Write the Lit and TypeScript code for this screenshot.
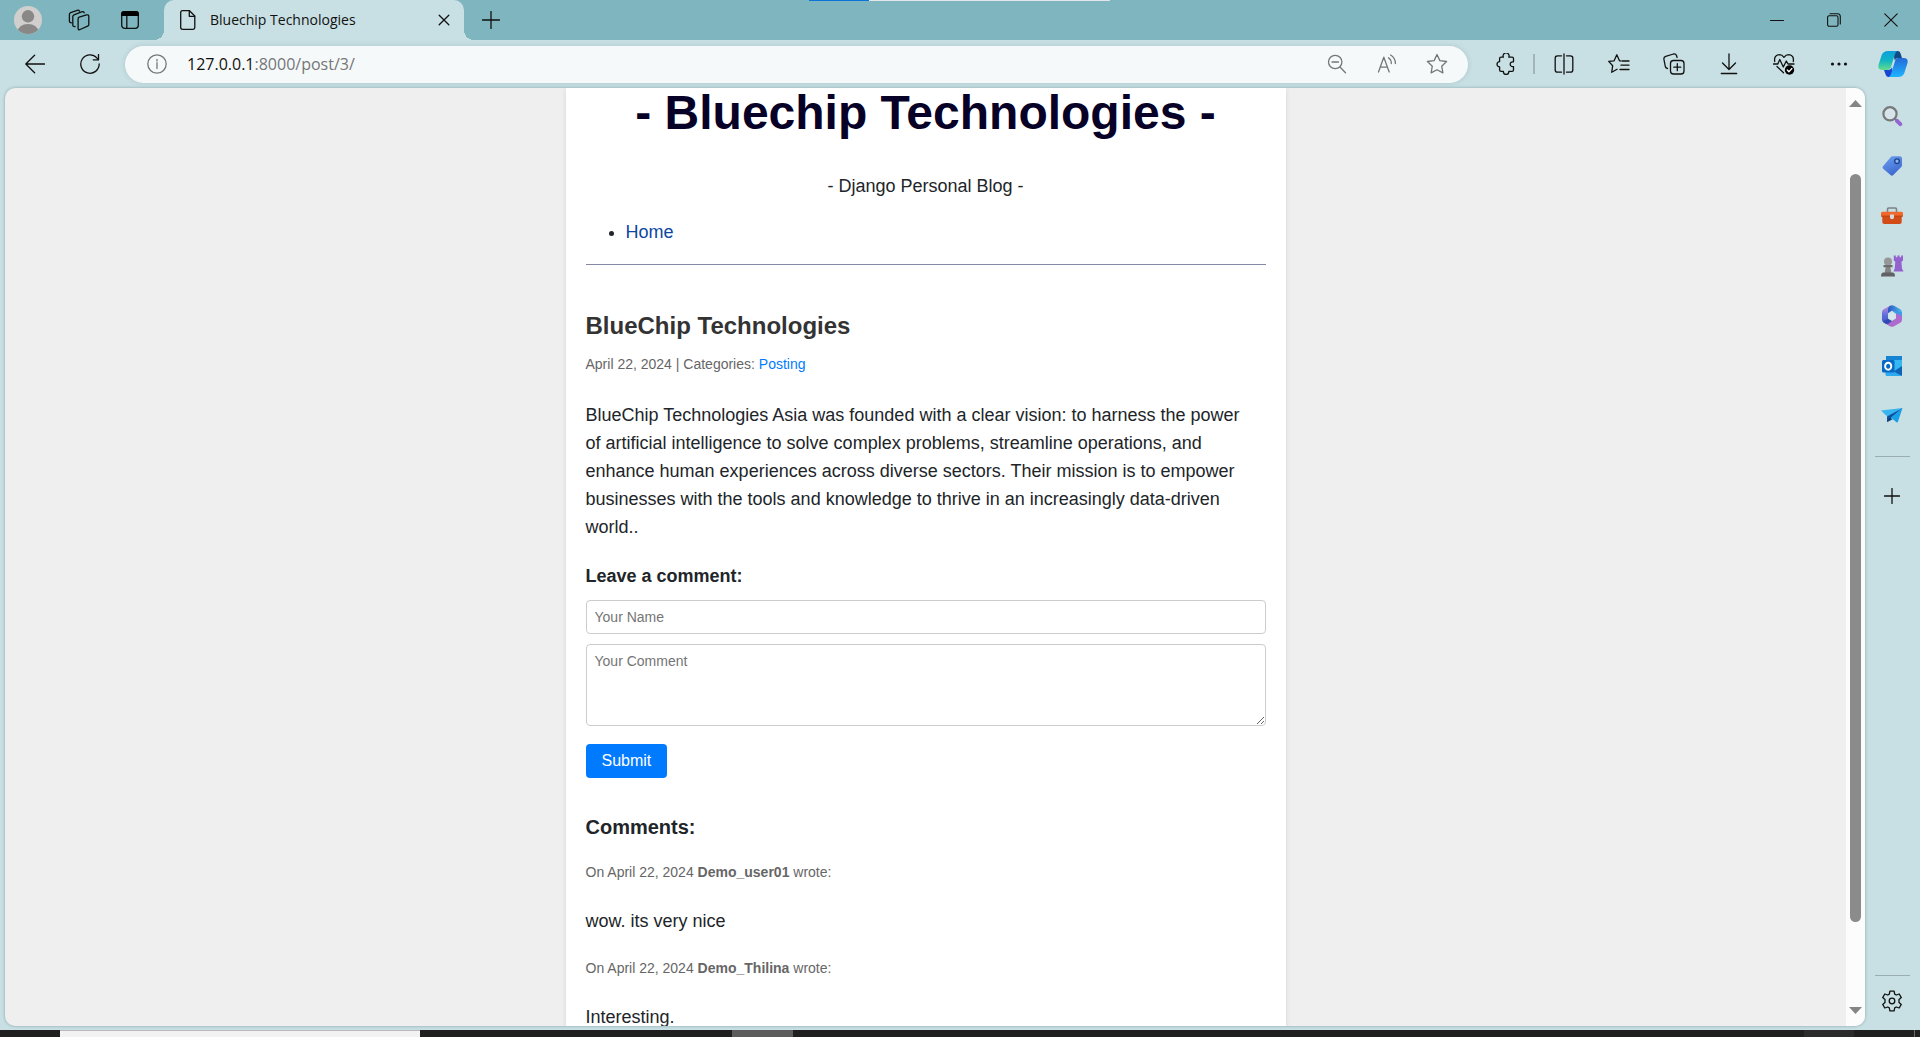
import { LitElement, html, css, svg } from "lit";
import { customElement } from "lit/decorators.js";

type Tool = { label: string; icon: unknown };

const icon = (size: number, body: unknown, cls = "line") =>
  html`<svg class=${cls} width=${size} height=${size} viewBox="0 0 ${size} ${size}" aria-hidden="true">${body}</svg>`;

const avatar = icon(28, svg`
  <clipPath id="face"><circle cx="14" cy="14" r="14"/></clipPath>
  <g clip-path="url(#face)"><rect width="28" height="28" fill="#d1cfcd"/>
  <circle cx="14" cy="10.300" r="6.200" fill="#8a8886"/><ellipse cx="14" cy="26" rx="10.500" ry="8" fill="#8a8886"/></g>`, "art");

const workspaces = icon(22, svg`
  <path d="M11.200 8.200 18.600 5.900q2.200-.4 2.200 1.500v8q0 1.200-1.200 1.700l-7.500 3.400q-2 .8-2-1.200V9.900q0-1.300 1.100-1.700Z"/>
  <path d="M7 17.500q-2.200.3-2.200-1.800V7.500q0-1.200 1.200-1.700l7.500-3q2-.5 2.800 1"/>
  <path d="M3.400 13.800q-2 0-2-1.800V5.400q0-1.200 1.200-1.700l6.600-2.400q1.600-.5 2.300.8"/>`);

const verticalTabs = icon(20, svg`
  <rect x="1.700" y="1.700" width="16.600" height="16.600" rx="3"/><path d="M6.800 6v12"/>
  <path d="M1 6V4q0-3 3-3h12q3 0 3 3v2Z" fill="#000" stroke="none"/>`);

const fileIcon = icon(20, svg`
  <path d="M4.500.7h7l5.300 5.300v11.500q0 1.800-1.800 1.800H4.500q-1.800 0-1.800-1.800v-15Q2.700.7 4.500.7Z"/><path d="M11.300 1v5.300h5.300"/>`);

const closeSmall = icon(12, svg`<path d="M1.200 1.200l9.600 9.600M10.800 1.200l-9.600 9.600"/>`);
const plus = icon(18, svg`<path d="M9 .5v17M.5 9h17"/>`);
const back = icon(20, svg`<path d="M19.500 10H1M9.600 1.200.8 10l8.800 8.800"/>`);
const refresh = icon(20, svg`<path d="M19.200 10A9.200 9.200 0 1 1 16.800 3.900L18.300 5.500"/><path d="M18.500.5v5.300h-5.300"/>`);
const info = icon(20, svg`<circle cx="10" cy="10" r="9.200"/><path d="M10 8.600v6M10 5.400v1.500"/>`);
const zoomOut = icon(20, svg`<circle cx="8.200" cy="8" r="6.700"/><path d="M13 13l5.500 5.700M5 8h6.500"/>`);
const readAloud = icon(20, svg`<path d="M1.500 18 6.800 3.200 12.200 18M3.200 13.200h7.200M11.500 3.800q3 2.200 2.800 5.700M13.600 1q5 3.200 4.800 8.500"/>`);
const star = icon(22, svg`<path d="M11 1.500l2.900 6.100 6.700.9-4.900 4.700 1.200 6.700L11 16.700l-5.900 3.200 1.200-6.700L1.400 8.500l6.700-.9Z"/>`);
const puzzle = icon(22, svg`<path d="M6 4.200h2.400a3 3 0 1 1 5.400 0h3.300q1.400 0 1.400 1.400v3.200h-.9a2.400 2.400 0 1 0 0 4.800h.9V17q0 1.400-1.400 1.400h-3.300v.3a2.700 2.700 0 1 1-5.400 0v-.3H6q-1.400 0-1.400-1.400v-3.200a2.600 2.600 0 1 1 0-5.200V5.600q0-1.400 1.400-1.400Z"/>`);
const split = icon(22, svg`<path d="M8.500 2.800H4.700Q2.200 2.800 2.200 5v12q0 2.200 2.500 2.200h3.800M13.500 2.800h3.800q2.500 0 2.500 2.200v12q0 2.200-2.500 2.200h-3.800M11 1v20"/>`);
const favorites = icon(22, svg`<path d="M12.800 7.800h-1.300L8.800 1.800 6.100 7.800l-5.400.6 4 4.300-1 6.600 5.400-3"/><path d="M14 8h7M13 12.200h8M12 16.500h9"/>`);
const collections = icon(22, svg`<rect x="7.500" y="7.500" width="13.500" height="13.500" rx="3"/><path d="M14.300 10.700v7M10.800 14.200h7M4.500 15.500q-1.600-.2-2.200-2L.9 6.200Q.6 4 2.700 3.300L10.500 1q2.200-.5 3 1.500l.6 2"/>`);
const download = icon(22, svg`<path d="M11 .8v15.500M4.500 10l6.500 6.500 6.500-6.500M3.300 20.500h15.400"/>`);
const health = icon(22, svg`
  <path d="M1.700 8.500Q.8 2 6.200 1.600q3 0 4.800 2.700 1.800-2.700 4.800-2.700Q21.200 2 20.300 8.500M4 13.500l6.500 6.300"/>
  <path d="M.5 11h4.300l2-4.500 3.500 7.500 3-6 1.700 3h6"/>
  <circle cx="16.500" cy="17" r="4.700" fill="#000" stroke="none"/><path d="m14.300 17 1.600 1.700 3-3.200" stroke="#fff"/>`);
const dots = icon(18, svg`<g fill="#111" stroke="none"><circle cx="2.500" cy="9" r="1.600"/><circle cx="9" cy="9" r="1.600"/><circle cx="15.500" cy="9" r="1.600"/></g>`);
const minimize = icon(14, svg`<path d="M.5 7.500h13" stroke-width="1"/>`);
const restore = icon(14, svg`<rect x=".6" y="2.800" width="10.400" height="10.400" rx="1.500" stroke-width="1.100"/><path d="M3 .7h7.500q2.800 0 2.800 2.800V11" stroke-width="1.100"/>`);
const closeWindow = icon(14, svg`<path d="m.8.800 12.400 12.400M13.200.800.8 13.200" stroke-width="1.100"/>`);

const copilot = icon(30, svg`
  <linearGradient id="ca" x1="0" y1="0" x2="0" y2="1"><stop offset="0" stop-color="#0d9fdc"/><stop offset=".5" stop-color="#12b5c4"/><stop offset="1" stop-color="#63dd8c"/></linearGradient>
  <linearGradient id="cb" x1="0" y1="0" x2="0" y2="1"><stop offset="0" stop-color="#2469d8"/><stop offset="1" stop-color="#1cb4ff"/></linearGradient>
  <path d="M15 2h4.500q2.300 0 3 2.300L24 9h-4q-2.500 0-3.300 2.500Z" fill="#124a86"/>
  <path d="M15 28h-4.500q-2 0-2.800-2.200L6 21h4.700q2.500 0 3.300-2.700Z" fill="#1745d2"/>
  <path d="M10 2h9.500q-1.800.7-2.500 3L13 18q-.9 3-3.700 3H4.500Q-.6 21 .5 16L3.500 6.500Q5 2 10 2Z" fill="url(#ca)"/>
  <path d="M20 28h-9.500q1.800-.7 2.500-3L17 12q.9-3 3.700-3h4.800q5.100 0 4 5l-3 9.500Q25 28 20 28Z" fill="url(#cb)"/>`, "art");

const sideSearch = icon(24, svg`<circle cx="10" cy="9.800" r="6.600" fill="#d7e5ea" stroke="#77787a" stroke-width="2.200"/>
  <path d="m14.700 14.500 2 1.900" stroke="#77787a" stroke-width="2"/><path d="m17 16.800 3.300 3.300" stroke="#9465cf" stroke-width="4" stroke-linecap="round"/>`, "art");
const sideTag = icon(24, svg`<linearGradient id="tg" x1="0" y1="0" x2=".5" y2="1"><stop stop-color="#6ea3f2"/><stop offset="1" stop-color="#3d68cf"/></linearGradient>
  <path d="M12.500 2.300h7q2.500 0 2.500 2.500v6.400q0 1-.8 1.800l-7.900 8q-1.400 1.400-2.800 0l-7.300-6.200q-1.500-1.400 0-2.800l7.600-8.900q.7-.8 1.700-.8Z" fill="url(#tg)"/><circle cx="17" cy="7.200" r="2.300" fill="#8fb5ee" stroke="#20428f" stroke-width="1.400"/>`, "art");
const sideTools = icon(24, svg`<path d="M7.500 8V5.200q0-1.200 1.200-1.200h6.600q1.200 0 1.200 1.200V8" fill="none" stroke="#7b8286" stroke-width="1.600"/>
  <path d="M2.300 12h19.400v6q0 2-2 2H4.300q-2 0-2-2Z" fill="#d14c17"/><rect x="1" y="7.800" width="22" height="5" rx="1.500" fill="#f0682b"/><path d="M1.300 12.200h21.400" stroke="#b33a0c"/><path d="M10 10.500h4v2.800q0 2-2 2t-2-2Z" fill="#d6d9db"/>`, "art");
const sideGames = icon(24, svg`<path d="M13.800 1.500h2v1.800h1.600V1.500h2.200v1.800h1.600V1.500h1.800v5l-1.600 1.300.6 6.700 1.500 3H13.500l1.200-3 .6-6.700-1.500-1.300Z" fill="#9462ce"/>
  <circle cx="8" cy="7.500" r="4" fill="#979797"/><path d="M6 11h4l1.400 8H4.600Z" fill="#858585"/><rect x="3.300" y="11" width="9.400" height="2.300" rx="1" fill="#6e6e6e"/><path d="M3.500 18.500h9q2.500 0 2.500 4H1q0-4 2.500-4Z" fill="#626262"/>`, "art");
const side365 = icon(24, svg`<linearGradient id="ma" x1="0" x2="1"><stop stop-color="#2a55bf"/><stop offset="1" stop-color="#4fb7f2"/></linearGradient>
  <linearGradient id="mb" x1="0" x2="0" y1="0" y2="1"><stop stop-color="#c58be2"/><stop offset=".5" stop-color="#5f6fd8"/><stop offset="1" stop-color="#3f52c0"/></linearGradient>
  <path d="m10 1.800-6.300 3.500Q2 6.300 2 8.200v7.600q0 1.600 1.500 2.500l3 1.800 3.500-2.700-2-2.600V9.200l4-2.900Z" fill="url(#mb)"/>
  <path d="M10 1.800q2-1.200 4 0l6.300 3.500Q22 6.300 22 8.200v4.600l-5.700-1.600-.3-1.800-4-2.800L8 9.100V5.500q0-2.500 2-3.700Z" fill="url(#ma)"/>
  <path d="M22 10.200v5.600q0 1.900-1.700 2.900L14 22.300q-2 1.100-4 0l-5-2.900q3 .3 5-1.400l6-3.400V9.400q4.500.8 6 .8Z" fill="#ae6bcd"/>
  <path d="M22 8.200v4q-2-2.200-6-2.800L12 6.600Z" fill="#3f9be8"/><path d="m2.600 17.700 3.500 2.200q2 .3 3.900-1.500l2-1.400-4-2.300Z" fill="#2f49b5"/>
  <path d="m12 8.200 3.500 2v4l-3.500 2-3.500-2v-4Z" fill="#d5e6ec"/>`, "art");
const sideOutlook = icon(24, svg`<rect x="6" y="2" width="16" height="19" rx="1.500" fill="#35b8f1"/><path d="M6 2h16v4H6Z" fill="#1683d3"/><path d="M6 6h8v7H6Z" fill="#1a9ae6"/>
  <path d="m22 12-10 6.500L22 22Z" fill="#0f63b5"/><path d="M5.500 13 22 22H7q-1.500 0-1.500-1.500Z" fill="#2eaaf0"/><rect x="2" y="6" width="12.500" height="12.500" rx="1.500" fill="#0669c5"/><ellipse cx="8.200" cy="12.200" rx="3.100" ry="3.500" fill="none" stroke="#fff" stroke-width="1.900"/>`, "art");
const sideDrop = icon(24, svg`<path d="M1 6.500 22.500 4 7.500 12.700Z" fill="#36b5f0"/><path d="M22.500 4 7 12.500v5.800l4.500-4Z" fill="#0b4f9c"/><path d="M22.500 4 10.700 13.500l5.800 4.800q1 .6 1.500-.8Z" fill="#179fe8"/><path d="m7.300 18 2.300-4.300 3 1.500Z" fill="#0a3c74"/>`, "art");
const plusSide = icon(16, svg`<path d="M8 .5v15M.5 8h15"/>`);
const gear = icon(22, svg`<path d="M8.900 1.100h4.200l.6 3 1.600.9 2.900-1 2.100 3.600-2.300 2v2.800l2.300 2-2.100 3.600-2.900-1-1.600.9-.6 3H8.900l-.6-3-1.600-.9-2.900 1-2.100-3.600 2.300-2V9.600l-2.300-2L3.800 4l2.900 1 1.600-.9Z" stroke-linejoin="round"/><circle cx="11" cy="11" r="2.800"/>`);

const TOOLS: Tool[] = [
  { label: "Split screen", icon: split },
  { label: "Favorites", icon: favorites },
  { label: "Collections", icon: collections },
  { label: "Downloads", icon: download },
  { label: "Browser essentials", icon: health },
  { label: "Settings and more", icon: dots },
];

const APPS: Tool[] = [
  { label: "Search", icon: sideSearch },
  { label: "Shopping", icon: sideTag },
  { label: "Tools", icon: sideTools },
  { label: "Games", icon: sideGames },
  { label: "Microsoft 365", icon: side365 },
  { label: "Outlook", icon: sideOutlook },
  { label: "Drop", icon: sideDrop },
];

const COMMENTS = [
  { date: "April 22, 2024", author: "Demo_user01", text: "wow. its very nice" },
  { date: "April 22, 2024", author: "Demo_Thilina", text: "Interesting." },
];

@customElement("blog-post")
export class BlogPost extends LitElement {
  static styles = css`
    :host { display: block; font: 18px/28px "Liberation Sans", Arial, sans-serif; color: #212529; }
    .page { box-sizing: border-box; max-width: 720px; margin: 0 auto; padding: 0 20px 40px; background: #fff; box-shadow: 0 0 5px rgba(0, 0, 0, 0.1); }
    .title { margin: 0; font-size: 48px; line-height: 50px; text-align: center; color: #080127; }
    .tagline { margin: 34px 0 18px; text-align: center; }
    .menu { margin: 0; padding: 0 0 18px 40px; border-bottom: 1px solid #8488a4; }
    .home { color: #0d47a1; text-decoration: none; }
    .headline { margin: 47px 0 14px; font-size: 24px; line-height: 28px; color: #333; }
    .meta { margin: 0; font-size: 14px; line-height: 20px; color: #666; }
    .category { color: #007bff; text-decoration: none; }
    .body { margin: 27px 0 21px; padding-right: 12px; }
    .prompt { margin: 0 0 10px; font-size: 18px; line-height: 28px; }
    .form { display: flex; flex-direction: column; align-items: flex-start; gap: 10px; }
    .field { display: block; box-sizing: border-box; width: 100%; margin: 0; padding: 8px; border: 1px solid #ccc; border-radius: 4px; background: #fff; font: 14px/16px "Liberation Sans", Arial, sans-serif; color: #333; outline: none; }
    .field::placeholder { color: #757575; }
    .area { resize: vertical; }
    .submit { margin-top: 8px; padding: 8px 16px; border: 0; border-radius: 4px; background: #007bff; color: #fff; font: 16px/18px "Liberation Sans", Arial, sans-serif; cursor: pointer; }
    .comments { margin: 35px 0 21px; font-size: 20px; line-height: 28px; }
    .comment { margin: 25px 0 23px; }
  `;

  render() {
    return html`<main class="page">
      <h1 class="title">- Bluechip Technologies -</h1>
      <p class="tagline">- Django Personal Blog -</p>
      <ul class="menu"><li><a class="home" href="#home">Home</a></li></ul>
      <h2 class="headline">BlueChip Technologies</h2>
      <p class="meta">April 22, 2024 | Categories: <a class="category" href="#posting">Posting</a></p>
      <p class="body">BlueChip Technologies Asia was founded with a clear vision: to harness the power of artificial intelligence to solve complex problems, streamline operations, and enhance human experiences across diverse sectors. Their mission is to empower businesses with the tools and knowledge to thrive in an increasingly data-driven world..</p>
      <h3 class="prompt">Leave a comment:</h3>
      <form class="form" @submit=${(e: Event) => e.preventDefault()}>
        <input class="field" type="text" placeholder="Your Name" aria-label="Your Name" />
        <textarea class="field area" rows="4" placeholder="Your Comment" aria-label="Your Comment"></textarea>
        <button class="submit" type="submit">Submit</button>
      </form>
      <h3 class="comments">Comments:</h3>
      ${COMMENTS.map((c) => html`<p class="meta">On ${c.date} <b>${c.author}</b> wrote:</p><p class="comment">${c.text}</p>`)}
    </main>`;
  }
}

@customElement("app-root")
export class AppRoot extends LitElement {
  static styles = css`
    :host { display: flex; flex-direction: column; height: 100vh; overflow: hidden; background: #c8dfe3; font-family: "Open Sans", "Noto Sans", sans-serif; color: #111; }
    svg { display: block; flex: none; }
    .line { fill: none; stroke: currentColor; stroke-width: 1.3; stroke-linecap: round; stroke-linejoin: round; }
    button { display: grid; place-items: center; flex: none; margin: 0; padding: 0; border: 0; background: none; color: inherit; }

    .titlebar { position: relative; display: flex; flex: none; height: 40px; padding: 0 1px 0 2px; background: #7eb5be; }
    .slot { width: 51px; }
    .tab { position: relative; display: flex; align-items: center; box-sizing: border-box; width: 300px; margin-left: 9px; padding: 0 14px; background: #c8dfe3; border-radius: 10px 10px 0 0; }
    .tab::before, .tab::after { content: ""; position: absolute; bottom: 0; width: 10px; height: 10px; }
    .tab::before { right: 100%; background: radial-gradient(circle at 0 0, transparent 10px, #c8dfe3 10px); }
    .tab::after { left: 100%; background: radial-gradient(circle at 100% 0, transparent 10px, #c8dfe3 10px); }
    .tab-title { flex: 1; margin-left: 12px; font-size: 14px; line-height: 20px; white-space: nowrap; }
    .tab-close { width: 12px; }
    .new-tab { width: 54px; }
    .spacer { flex: 1; }
    .window { width: 57px; }
    .progress { position: absolute; top: 0; left: 50%; display: flex; width: 301px; height: 1px; margin-left: -151px; background: #e3e6e8; }
    .progress-done { width: 20%; background: #0a74d8; }

    .toolbar { display: flex; flex: none; align-items: center; height: 48px; padding: 0 1px 0 7px; }
    .tool { width: 55px; height: 40px; }
    .address { display: flex; flex: 1; align-items: center; box-sizing: border-box; height: 37px; margin: 0 10px 0 8px; padding: 0 6px 0 22px; border-radius: 19px; background: #f6f9fa; color: #747678; box-shadow: 0 0 5px rgba(60, 110, 120, 0.2); }
    .url { flex: 1; margin-left: 20px; font-size: 16px; line-height: 24px; white-space: nowrap; outline: none; }
    .host { color: #111; }
    .inline { width: 50px; height: 36px; }
    .divider { width: 2px; height: 20px; margin-right: 1px; background: #a3b5b9; }
    .copilot { width: 53px; height: 40px; }

    .body { display: flex; flex: 1; min-height: 0; padding-left: 5px; }
    .view { display: flex; flex: 1; min-width: 0; overflow: hidden; border-radius: 10px; background: #efefef; box-shadow: 0 0 3px rgba(40, 90, 100, 0.45); }
    .scroll { flex: 1; min-width: 0; overflow: hidden; }
    .scrollbar { display: flex; flex: none; flex-direction: column; align-items: center; box-sizing: border-box; width: 19px; padding: 12px 0; background: #fcfcfc; }
    .track-top { flex: 67; }
    .thumb { flex: 748; width: 11px; border-radius: 6px; background: #8b8b8b; }
    .track-bottom { flex: 85; }
    .arrow { fill: #858585; }

    .sidebar { display: flex; flex: none; flex-direction: column; align-items: center; width: 54px; padding: 3px 1px 0 0; }
    .app { width: 50px; height: 50px; }
    .rule { flex: none; width: 35px; height: 1px; background: #9aadb1; }
    .first-rule { margin: 15px 0 14px; }

    .taskbar { display: flex; flex: none; height: 7px; margin-top: 4px; background: #1f1f1f; }
    .search-box { width: 360px; margin-left: 60px; background: #f2f2f2; border-top: 1px solid #b9b9b9; box-sizing: border-box; }
    .active-app { width: 61px; margin-left: 312px; background: #5c5c5c; }
    .tray { width: 50px; background: #2b2b2b; }
    .desktop { width: 5px; margin-left: 60px; border-left: 1px solid #6a6a6a; }
  `;

  private button(label: string, cls: string, glyph: unknown) {
    return html`<button class=${cls} type="button" aria-label=${label}>${glyph}</button>`;
  }

  render() {
    return html`
      <header class="titlebar">
        ${this.button("Profile", "slot", avatar)}
        ${this.button("Workspaces", "slot", workspaces)}
        ${this.button("Tab actions", "slot", verticalTabs)}
        <div class="tab">${fileIcon}<span class="tab-title">Bluechip Technologies</span>${this.button("Close tab", "tab-close", closeSmall)}</div>
        ${this.button("New tab", "new-tab", plus)}
        <div class="spacer"></div>
        ${this.button("Minimize", "window", minimize)}
        ${this.button("Restore", "window", restore)}
        ${this.button("Close", "window", closeWindow)}
        <div class="progress"><div class="progress-done"></div></div>
      </header>
      <nav class="toolbar">
        ${this.button("Back", "tool", back)}
        ${this.button("Refresh", "tool", refresh)}
        <div class="address">
          ${info}
          <div class="url" role="textbox" contenteditable="true" spellcheck="false" aria-label="Address"><span class="host">127.0.0.1</span>:8000/post/3/</div>
          ${this.button("Zoom", "inline", zoomOut)}
          ${this.button("Read aloud", "inline", readAloud)}
          ${this.button("Add to favorites", "inline", star)}
        </div>
        ${this.button("Extensions", "tool", puzzle)}
        <div class="divider"></div>
        ${TOOLS.map((t) => this.button(t.label, "tool", t.icon))}
        ${this.button("Copilot", "copilot", copilot)}
      </nav>
      <div class="body">
        <div class="view">
          <div class="scroll"><blog-post></blog-post></div>
          <div class="scrollbar">
            <svg class="arrow" width="13" height="7" viewBox="0 0 13 7"><path d="M6.500 0 13 7H0Z" /></svg>
            <div class="track-top"></div>
            <div class="thumb"></div>
            <div class="track-bottom"></div>
            <svg class="arrow" width="13" height="7" viewBox="0 0 13 7"><path d="M0 0h13L6.500 7Z" /></svg>
          </div>
        </div>
        <aside class="sidebar">
          ${APPS.map((a) => this.button(a.label, "app", a.icon))}
          <div class="rule first-rule"></div>
          ${this.button("Customize", "app", plusSide)}
          <div class="spacer"></div>
          <div class="rule"></div>
          ${this.button("Settings", "app", gear)}
        </aside>
      </div>
      <footer class="taskbar">
        <div class="search-box"></div>
        <div class="active-app"></div>
        <div class="spacer"></div>
        <div class="tray"></div>
        <div class="desktop"></div>
      </footer>
    `;
  }
}
